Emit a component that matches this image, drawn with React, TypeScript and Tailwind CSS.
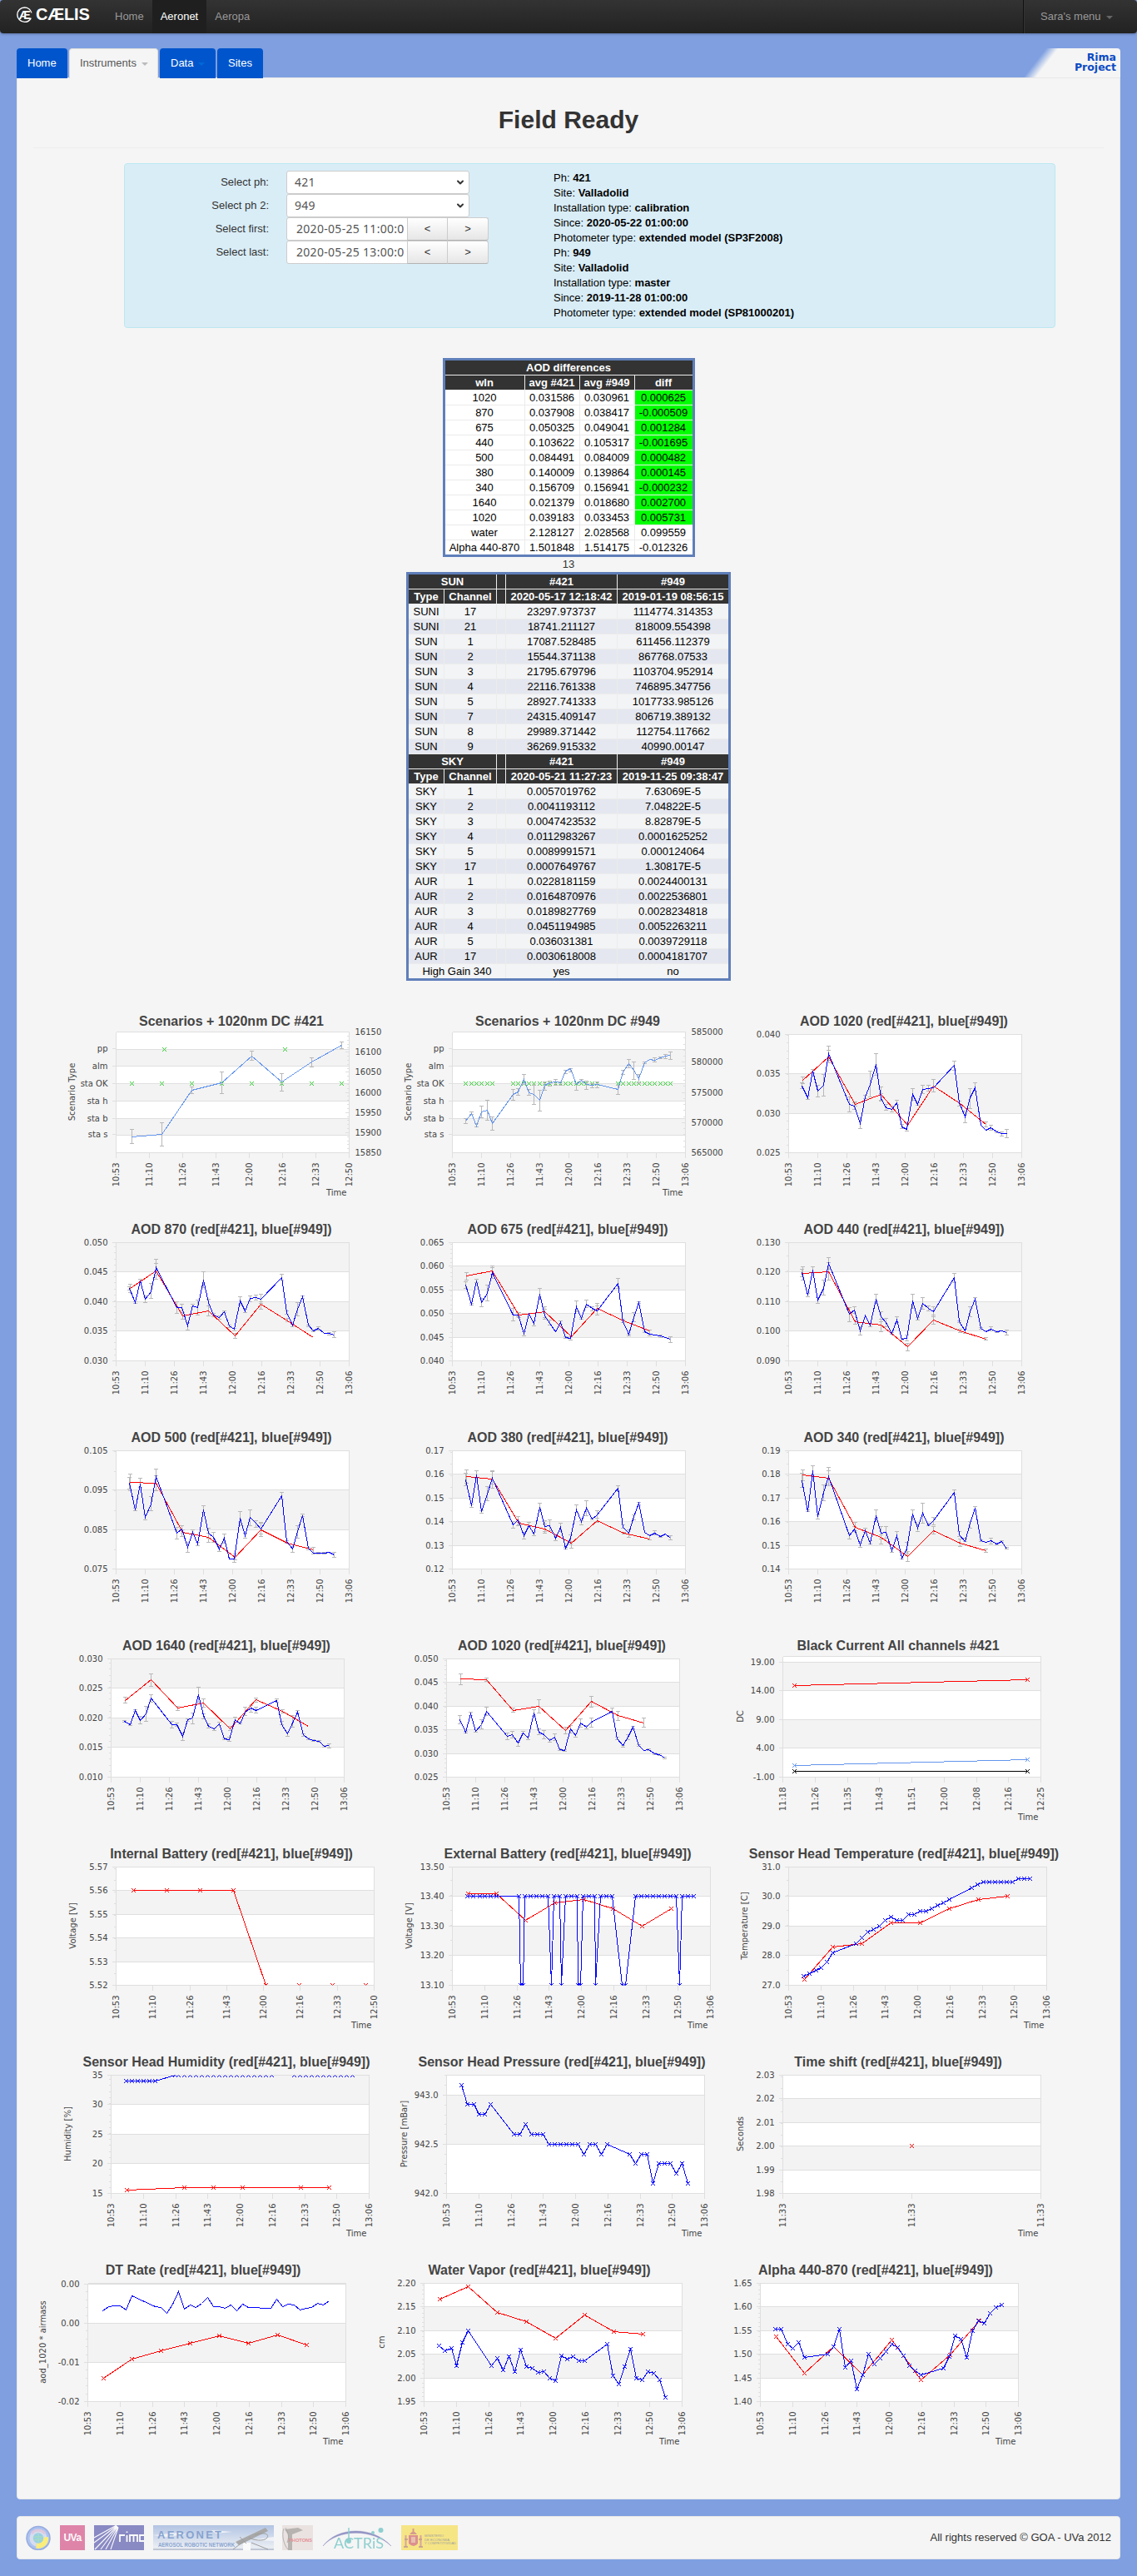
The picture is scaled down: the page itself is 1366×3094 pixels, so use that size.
import React from 'react';
import { ChevronDown } from 'lucide-react';

type Point = [number, number];

interface Series {
  color: string;
  points: Point[];
  line?: boolean;
  markers?: boolean;
}

interface ChartConfig {
  title: string;
  left: number;
  top?: number;
  width?: number;
  rows: number[]; // horizontal grid lines, px from the plot top
  labels: string[];
  labelRows?: number[];
  minor?: number;
  times: string[];
  yName?: string;
  yNameX?: number;
  showTime?: boolean;
  rightLabels?: string[];
  series: Series[];
  errors?: string;
}

const RED = '#ff0000';
const BLUE = '#0000ff';
const SKY = '#6495ed';
const GREEN = '#32cd32';

// Measurement instants, px from the start of the time axis
const X949 = [16, 23, 29, 35, 42, 48, 73, 79, 86, 92, 98, 105, 111, 117, 124, 130, 136, 142, 149, 155, 161, 168, 174, 199, 205, 212, 218, 224, 231, 237, 243, 250, 256, 262];
const X421 = [17, 48, 80, 111, 143, 174, 206, 237];
const WIDE949 = [18, 25, 33, 39, 46, 53, 81, 88, 95, 102, 109, 116, 123, 130, 137, 144, 151, 158, 165, 172, 179, 186, 193, 220, 227, 234, 241, 248, 255, 262, 269, 276, 283, 290];
const WIDE421 = [19, 53, 88, 123, 158, 193, 228, 263];

const LONG = ['10:53', '11:10', '11:26', '11:43', '12:00', '12:16', '12:33', '12:50', '13:06'];
const SHORT = LONG.slice(0, 8);

const R3 = [0, 47, 95, 142];
const R4 = [0, 35, 71, 106, 142];
const R5 = [0, 28, 57, 85, 114, 142];

const zip = (xs: number[], ys: string): Point[] => ys.split(' ').map((y, i) => [xs[i], Number(y)]);
const pts = (s: string): Point[] => s.split(' ').map(p => p.split(',').map(Number) as Point);
const crosses = (points: Point[]) => points.map(([x, y]) => `M${x - 2.5} ${y - 2.5}l5 5m0 -5l-5 5`).join('');

const aod = (name: string, left: number, rows: number[], labels: string[], minor: number, red: string, blue: string, errors: string): ChartConfig => ({
  title: `AOD ${name} (red[#421], blue[#949])`,
  left, rows, labels, minor, errors,
  times: LONG,
  series: [
    { color: RED, points: zip(X421, red) },
    { color: BLUE, points: zip(X949, blue) },
  ],
});

const charts: ChartConfig[] = [
  {
    title: 'Scenarios + 1020nm DC #421',
    left: 79, top: 39,
    rows: [0, 21, 41, 62, 83, 104, 124, 145],
    labelRows: [20, 41, 62, 83, 104, 123],
    labels: ['pp', 'alm', 'sta OK', 'sta h', 'sta b', 'sta s'],
    times: SHORT, yName: 'Scenario Type', yNameX: 30, showTime: true,
    rightLabels: ['16150', '16100', '16050', '16000', '15950', '15900', '15850'],
    series: [
      { color: GREEN, line: false, markers: true, points: pts('58,21 203,21 19,62 55,62 91,62 127,62 163,62 199,62 235,62 271,62') },
      { color: SKY, points: pts('19,126 55,123 91,70 127,61 163,29 199,60 235,36 271,16') },
    ],
    errors: '19,117,134 55,109,137 91,66,74 127,48,74 163,23,34 199,50,71 235,31,42 271,12,20',
  },
  {
    title: 'Scenarios + 1020nm DC #949',
    left: 79, top: 39,
    rows: [0, 21, 41, 62, 83, 104, 124, 145],
    labelRows: [20, 41, 62, 83, 104, 123],
    labels: ['pp', 'alm', 'sta OK', 'sta h', 'sta b', 'sta s'],
    times: LONG, yName: 'Scenario Type', yNameX: 30, showTime: true,
    rightLabels: ['585000', '580000', '575000', '570000', '565000'],
    series: [
      { color: GREEN, line: false, markers: true, points: X949.map(x => [x, 62] as Point) },
      { color: SKY, points: zip(X949, '107 98 113 96 94 110 75 72 57 73 75 82 64 61 60 61 47 44 63 58 63 64 63 69 48 38 46 56 37 33 34 31 29 28') },
    ],
    errors: '16,104,110 23,96,99 29,110,114 35,89,103 42,82,106 48,102,118 73,69,82 79,68,76 86,51,63 92,69,76 98,64,87 105,70,95 111,60,70 117,59,65 124,57,64 130,60,64 136,46,50 142,44,48 149,62,70 155,57,59 161,59,69 168,62,67 174,60,67 199,64,75 205,46,51 212,33,43 218,36,57 224,51,61 231,36,38 243,31,36 250,30,32 256,27,32 262,24,33',
  },
  aod('1020', 79, R3, ['0.040', '0.035', '0.030', '0.025'], 4,
    '55 27 84 72 109 62 83 108',
    '62 76 44 68 61 23 84 86 107 75 60 36 77 88 90 82 111 114 72 84 66 65 64 37 82 99 76 64 109 115 112 117 119 119',
    '16,58,65 17,51,59 23,74,78 29,42,46 35,61,75 42,48,74 48,14,34 48,19,31 73,75,93 79,82,90 80,81,86 86,100,113 92,73,77 98,44,75 105,23,49 111,63,80 111,71,79 117,84,91 124,86,93 130,79,84 136,108,113 142,106,116 149,65,79 155,82,85 161,61,71 168,61,68 174,54,69 199,32,43 205,80,86 212,92,106 218,65,89 224,58,68 237,105,111 243,109,115 250,116,118 256,117,122 262,114,124'),
  aod('870', 79, R4, ['0.050', '0.045', '0.040', '0.035', '0.030'], 4,
    '55 34 88 82 112 74 94 114',
    '55 72 46 68 59 30 78 78 100 76 78 45 72 87 90 83 100 104 70 82 67 66 68 42 84 99 80 65 99 106 103 109 109 111',
    '16,53,57 17,50,60 23,71,73 29,44,48 35,64,72 42,49,67 48,20,44 48,25,39 73,71,85 79,74,84 80,84,92 86,96,105 92,74,77 98,69,87 105,35,54 111,68,76 111,76,88 117,85,89 124,88,92 130,82,84 136,99,102 142,103,106 143,109,115 149,65,75 155,80,84 161,64,71 168,63,69 174,62,73 174,71,80 199,38,45 205,82,86 206,91,95 212,98,101 218,72,88 224,64,67 231,99,101 237,105,107 243,101,105 256,108,111 262,107,114'),
  aod('675', 79, R5, ['0.065', '0.060', '0.055', '0.050', '0.045', '0.040'], 4,
    '40 34 87 83 113 79 94 106',
    '51 74 46 72 61 36 87 87 109 86 97 62 88 97 107 96 114 115 77 91 74 79 82 49 95 110 90 72 107 110 111 112 114 116',
    '16,47,55 17,36,45 23,73,75 29,44,48 35,67,77 42,51,70 48,28,43 48,30,38 73,79,94 79,84,89 80,84,90 86,107,112 98,94,100 105,55,68 111,77,92 111,80,90 117,93,99 130,94,98 136,113,115 142,113,117 149,70,83 155,90,92 161,69,78 168,77,82 174,73,87 174,76,81 199,43,55 205,92,96 212,110,112 218,84,95 224,71,73 231,106,108 237,105,112 250,111,114 262,113,120'),
  aod('440', 79, R4, ['0.130', '0.120', '0.110', '0.100', '0.090'], 1,
    '37 35 95 99 125 93 106 116',
    '36 63 33 69 55 25 86 81 106 88 99 68 89 96 109 93 116 115 70 91 73 79 83 42 95 106 83 68 103 107 104 107 106 108',
    '16,32,41 17,29,45 23,61,65 29,29,36 35,66,73 42,45,63 48,18,32 48,24,45 73,78,95 79,77,85 80,93,98 86,101,111 98,97,101 105,62,73 111,83,95 111,92,107 117,91,101 124,108,110 130,89,96 136,115,117 142,111,118 143,121,130 149,62,79 155,90,93 161,66,80 168,76,82 174,77,89 174,87,98 199,37,48 205,94,96 206,104,108 212,104,109 218,77,89 224,66,70 231,102,104 237,114,117 243,101,106 250,106,108 262,105,111'),
  aod('500', 79, R3, ['0.105', '0.095', '0.085', '0.075'], 1,
    '38 39 98 104 128 95 111 119',
    '39 71 40 80 64 31 99 94 116 98 112 71 99 104 118 105 130 130 81 102 80 87 94 54 109 118 97 78 117 123 123 123 122 125',
    '16,32,46 17,28,48 23,69,72 29,33,44 35,77,83 42,55,72 48,22,48 48,30,40 73,92,106 79,90,103 80,95,99 86,110,122 92,95,99 98,110,114 105,66,74 111,93,110 111,99,105 117,98,110 124,116,121 130,100,111 142,126,134 143,124,131 149,73,90 155,99,105 161,71,90 168,84,92 174,86,103 174,87,100 199,50,58 205,108,111 212,115,122 218,90,105 224,76,79 231,116,119 237,116,124 243,122,124 250,122,124 262,122,128'),
  aod('380', 79, R5, ['0.17', '0.16', '0.15', '0.14', '0.13', '0.12'], 1,
    '31 34 87 94 111 84 99 106',
    '35 66 29 73 52 33 89 83 102 90 100 68 91 90 105 92 117 105 71 85 69 82 77 45 92 99 79 63 98 102 99 103 100 105',
    '16,27,42 17,23,39 23,64,68 29,24,33 35,72,75 42,43,60 48,24,40 48,25,45 73,85,93 79,79,90 80,86,89 86,98,106 92,86,91 98,98,102 105,63,72 111,84,99 111,88,97 117,83,96 124,103,108 130,87,97 136,116,118 142,101,112 143,109,117 149,65,74 155,84,89 161,60,78 168,81,83 174,72,86 174,81,85 199,42,48 205,89,93 206,98,100 212,95,104 218,77,83 224,62,65 237,101,107 243,96,101 250,102,104 262,102,107'),
  aod('340', 79, R5, ['0.19', '0.18', '0.17', '0.16', '0.15', '0.14'], 1,
    '29 33 92 104 127 96 111 120',
    '36 73 24 79 50 31 102 94 113 96 111 78 99 98 120 102 129 118 76 93 75 90 84 50 101 109 87 69 108 110 108 112 109 118',
    '16,27,44 17,23,36 23,71,73 29,18,31 35,77,82 42,41,60 48,20,42 48,24,40 73,99,106 79,91,97 80,86,96 86,111,116 92,93,98 98,108,112 105,71,85 111,91,106 111,101,112 117,91,105 124,117,122 130,97,106 136,126,130 142,110,123 143,121,133 149,71,82 155,88,97 161,63,87 168,87,90 174,80,89 174,91,100 199,47,52 205,97,103 206,106,115 212,105,109 218,85,93 224,67,71 231,107,109 237,118,122 243,105,112 250,111,113 256,108,110 262,116,118'),
  aod('1640', 73, R4, ['0.030', '0.025', '0.020', '0.015', '0.010'], 4,
    '50 25 59 53 84 49 63 81',
    '75 79 62 74 66 47 79 79 93 73 71 43 68 81 84 78 96 97 73 78 64 59 62 50 79 90 77 64 91 96 98 99 105 104',
    '16,74,76 17,46,53 23,78,80 29,61,63 35,69,78 42,57,75 48,18,33 48,43,52 73,75,83 79,77,81 80,57,62 86,89,98 92,72,75 98,65,78 105,34,52 111,48,58 111,66,72 117,78,83 124,83,86 130,76,80 136,95,97 142,94,99 143,81,86 149,70,76 155,76,78 161,58,68 168,56,64 174,58,65 174,47,52 199,48,52 205,75,79 206,61,65 212,88,93 218,68,82 224,62,65 231,90,93 237,95,97 243,97,99 250,98,100 256,104,106 262,102,107'),
  aod('1020', 72, R5, ['0.050', '0.045', '0.040', '0.035', '0.030', '0.025'], 4,
    '24 25 62 57 86 51 68 77',
    '73 88 66 87 79 63 93 91 101 89 95 65 88 91 98 94 109 110 84 92 77 82 76 63 96 104 94 82 104 110 109 114 115 119',
    '17,18,31 48,23,27 16,68,78 23,87,89 29,64,68 35,85,88 42,73,84 48,58,68 73,89,97 79,87,95 80,59,64 86,100,105 92,87,90 98,93,97 105,61,69 111,49,65 111,84,91 117,86,96 124,96,100 130,90,98 136,108,110 142,109,111 143,82,90 149,80,89 155,90,94 161,72,82 168,80,84 174,71,82 174,45,58 199,59,65 205,94,97 206,63,74 212,104,106 218,91,97 224,81,84 231,103,105 237,71,82 243,108,110 250,113,115 256,114,116 262,118,120'),
  {
    title: 'Black Current All channels #421',
    left: 72, top: 39, width: 310,
    rows: [0, 7, 41, 76, 110, 145],
    labelRows: [7, 41, 76, 110, 145],
    labels: ['19.00', '14.00', '9.00', '4.00', '-1.00'],
    times: ['11:18', '11:26', '11:35', '11:43', '11:51', '12:00', '12:08', '12:16', '12:25'],
    yName: 'DC', yNameX: 25, showTime: true,
    series: [
      { color: RED, markers: true, points: pts('14,35 294,28') },
      { color: SKY, markers: true, points: pts('14,131 294,124') },
      { color: '#000000', markers: true, points: pts('14,138 294,138') },
    ],
  },
  {
    title: 'Internal Battery (red[#421], blue[#949])',
    left: 79, width: 310, rows: R5, minor: 1,
    labels: ['5.57', '5.56', '5.55', '5.54', '5.53', '5.52'],
    times: SHORT, yName: 'Voltage [V]', yNameX: 31, showTime: true,
    series: [
      { color: RED, markers: true, points: pts('21,28 61,28 101,28 141,28 180,142') },
      { color: RED, line: false, markers: true, points: pts('220,142 260,142 300,142') },
    ],
  },
  {
    title: 'External Battery (red[#421], blue[#949])',
    left: 79, width: 310, rows: R4, minor: 1,
    labels: ['13.50', '13.40', '13.30', '13.20', '13.10'],
    times: LONG, yName: 'Voltage [V]', yNameX: 31, showTime: true,
    series: [
      { color: RED, markers: true, points: zip(WIDE421, '32 32 64 43 39 50 71 50') },
      { color: BLUE, markers: true, points: pts('18,35 25,35 33,35 39,35 46,35 53,35 80,35 82,142 85,142 87,35 94,35 101,35 108,35 115,35 119,142 122,35 129,35 131,142 136,35 143,35 150,35 151,142 154,142 157,35 164,35 171,35 172,142 178,35 185,35 192,35 204,142 208,142 220,35 227,35 234,35 241,35 248,35 255,35 262,35 269,35 273,142 276,35 283,35 290,35') },
    ],
  },
  {
    title: 'Sensor Head Temperature (red[#421], blue[#949])',
    left: 79, width: 310, rows: R4, minor: 1,
    labels: ['31.0', '30.0', '29.0', '28.0', '27.0'],
    times: LONG, yName: 'Temperature [C]', yNameX: 30, showTime: true,
    series: [
      { color: RED, markers: true, points: zip(WIDE421, '135 96 92 67 67 50 39 35') },
      { color: BLUE, markers: true, points: zip(WIDE949, '131 128 124 121 114 103 92 85 78 75 71 64 60 64 64 57 57 53 53 50 46 43 39 25 21 18 18 18 18 18 18 14 14 14') },
    ],
  },
  {
    title: 'Sensor Head Humidity (red[#421], blue[#949])',
    left: 73, width: 310, rows: R4, minor: 4,
    labels: ['35', '30', '25', '20', '15'],
    times: LONG, yName: 'Humidity [%]', yNameX: 25, showTime: true,
    series: [
      { color: RED, markers: true, points: pts('19,138 88,135 123,135 158,135 228,135 262,135') },
      { color: BLUE, markers: true, points: pts('18,7 25,7 32,7 39,7 46,7 53,7 77,0') },
      { color: BLUE, line: false, markers: true, points: WIDE949.slice(6).map(x => [x, 0] as Point) },
    ],
  },
  {
    title: 'Sensor Head Pressure (red[#421], blue[#949])',
    left: 72, width: 310,
    rows: [0, 24, 83, 142],
    labelRows: [24, 83, 142],
    minor: 4,
    labels: ['943.0', '942.5', '942.0'],
    times: LONG, yName: 'Pressure [mBar]', yNameX: 25, showTime: true,
    series: [
      { color: BLUE, markers: true, points: zip(WIDE949, '12 35 35 47 47 35 71 71 59 71 71 71 83 83 83 83 83 83 95 83 83 95 83 95 106 95 95 130 106 106 106 118 106 130') },
    ],
  },
  {
    title: 'Time shift (red[#421], blue[#949])',
    left: 72, width: 310, rows: R5, minor: 1,
    labels: ['2.03', '2.02', '2.01', '2.00', '1.99', '1.98'],
    times: ['11:33', '11:33', '11:33'],
    yName: 'Seconds', yNameX: 25, showTime: true,
    series: [{ color: RED, markers: true, points: [[155, 85]] }],
  },
  {
    title: 'DT Rate (red[#421], blue[#949])',
    left: 45, width: 310,
    rows: [0, 1, 48, 95, 142],
    labelRows: [1, 48, 95, 142],
    minor: 4,
    labels: ['0.00', '0.00', '-0.01', '-0.02'],
    times: LONG, yName: 'aod_1020 * airmass', yNameX: -5, showTime: true,
    series: [
      { color: RED, markers: true, points: zip(WIDE421, '114 91 81 72 63 72 62 74') },
      { color: BLUE, points: zip(WIDE949, '33 28 27 27 32 15 28 29 36 25 10 31 26 29 24 17 28 28 30 26 33 25 29 30 19 28 25 26 32 30 29 24 26 21') },
    ],
  },
  {
    title: 'Water Vapor (red[#421], blue[#949])',
    left: 45, width: 310, rows: R5, minor: 4,
    labels: ['2.20', '2.15', '2.10', '2.05', '2.00', '1.95'],
    times: LONG, yName: 'cm', yNameX: -2, showTime: true,
    series: [
      { color: RED, markers: true, points: zip(WIDE421, '19 4 35 46 66 38 58 61') },
      { color: BLUE, markers: true, points: zip(WIDE949, '75 81 78 99 71 57 99 90 104 88 106 80 100 102 107 106 114 117 87 91 88 93 93 73 111 121 100 79 114 116 106 108 116 137') },
    ],
  },
  {
    title: 'Alpha 440-870 (red[#421], blue[#949])',
    left: 45, width: 310, rows: R5, minor: 4,
    labels: ['1.65', '1.60', '1.55', '1.50', '1.45', '1.40'],
    times: LONG, showTime: true,
    series: [
      { color: RED, markers: true, points: zip(WIDE421, '64 108 76 110 68 116 86 45') },
      { color: BLUE, markers: true, points: zip(WIDE949, '55 55 73 78 71 89 85 76 55 101 93 127 110 85 97 90 82 73 77 87 99 105 110 102 88 63 67 89 57 45 48 36 29 26') },
    ],
  },
];

const Chart: React.FC<{ config: ChartConfig; id: string }> = ({ config, id }) => {
  const { title, left, top = 42, width = 280, rows, labels, labelRows = rows, minor = 0, times, yName, yNameX, showTime, rightLabels, series, errors } = config;
  const height = rows[rows.length - 1];
  const majors = labelRows;

  const minorTicks: number[] = [];
  if (minor > 0) {
    const step = (majors[majors.length - 1] - majors[majors.length - 2]) / (minor + 1);
    for (let y = height - step; y > 0; y -= step) minorTicks.push(Math.round(y));
  }

  const rightStep = rightLabels ? height / (rightLabels.length - 1) : 0;

  return (
    <svg width="404" height="250" viewBox="0 0 404 250" className="block overflow-visible" fontFamily='"DejaVu Sans", sans-serif' fontSize="10" fill="#444">
      <text x={left + 139} y="32" textAnchor="middle" fontFamily='"Liberation Sans", Arial, sans-serif' fontSize="16" fontWeight="bold">{title}</text>
      <clipPath id={id}>
        <rect x="-1" y="0" width={width + 2} height={height} />
      </clipPath>

      <g transform={`translate(${left + 0.5} ${top + 0.5})`}>
        <g shapeRendering="crispEdges">
          {/* Bands alternate upwards, the lowest one is white */}
          {rows.slice(1).map((y, i) => (
            <rect key={i} x="0" y={rows[i]} width={width} height={y - rows[i]} fill={(rows.length - 2 - i) % 2 === 0 ? '#fff' : '#f3f3f3'} />
          ))}
          <g stroke="#dfdfdf" fill="none">
            {rows.map(y => <path key={y} d={`M0 ${y}H${width}`} />)}
            {majors.map((y, i) => <path key={i} d={`M-5 ${y}H0`} />)}
            {minorTicks.map(y => <path key={y} d={`M-3 ${y}H0`} />)}
            {times.map((_, i) => {
              const x = Math.round((i * width) / (times.length - 1));
              return <path key={i} d={`M${x} ${height}v6`} />;
            })}
            {rightLabels && rightLabels.slice(1).map((_, i) => [1, 2, 3, 4, 5].map(j => (
              <path key={`${i}-${j}`} d={`M${width} ${Math.round((i + j / 5) * rightStep)}h${j === 5 ? -5 : -3}`} />
            )))}
            <path d={`M0 0V${height}M${width} 0V${height}`} />
          </g>
          {series.filter(s => s.color === GREEN).map((s, i) => (
            <path key={i} d={crosses(s.points)} stroke={s.color} fill="none" />
          ))}
          {errors && errors.split(' ').map((e, i) => {
            const [x, y1, y2] = e.split(',').map(Number);
            return <path key={i} d={`M${x} ${y1}V${y2}M${x - 2.5} ${y1}h5M${x - 2.5} ${y2}h5`} stroke="#b8b8b8" fill="none" />;
          })}
          <g clipPath={`url(#${id})`}>
            {series.filter(s => s.color !== GREEN).map((s, i) => (
              <g key={i} stroke={s.color} fill="none">
                {s.line !== false && <path d={`M${s.points.map(p => p.join(' ')).join('L')}`} />}
                {s.markers && <path d={crosses(s.points)} />}
              </g>
            ))}
          </g>
        </g>

        {labels.map((label, i) => (
          <text key={i} x="-10" y={majors[i] + 3.5} textAnchor="end">{label}</text>
        ))}
        {rightLabels && rightLabels.map((label, i) => (
          <text key={i} x={width + 7} y={Math.round(i * rightStep) + 3.5}>{label}</text>
        ))}
      </g>

      {times.map((t, i) => (
        <text key={i} transform={`translate(${left + Math.round((i * width) / (times.length - 1)) + 4} 196.5) rotate(-90)`} textAnchor="end">{t}</text>
      ))}
      {yName && (
        <text transform={`translate(${yNameX} ${top + height / 2}) rotate(-90)`} textAnchor="middle">{yName}</text>
      )}
      {showTime && <text x={left + width - 2.5} y="235.5" textAnchor="end">Time</text>}
    </svg>
  );
};

const Caret: React.FC<{ className: string }> = ({ className }) => (
  <svg width="8" height="4" viewBox="0 0 8 4" className={`ml-1.5 inline-block align-middle ${className}`}>
    <path d="M0 0h8L4 4z" fill="currentColor" />
  </svg>
);

const Navbar = () => (
  <nav className="flex h-10 rounded bg-gradient-to-b from-[#333] to-[#222] text-[#999] leading-10 shadow-[0_1px_3px_rgba(0,0,0,0.3)]">
    <a className="flex w-32 items-start gap-1 pl-5 text-xl font-bold text-white">
      <svg width="19" height="20" viewBox="0 0 19 20" className="mt-2 shrink-0">
        <circle cx="9.5" cy="9.7" r="8.7" fill="none" stroke="#fff" strokeWidth="1.4" strokeDasharray="48 7" strokeDashoffset="-4" />
        <text x="9.8" y="14.8" textAnchor="middle" fontSize="14" fontWeight="bold" fill="#fff" fontFamily='"Liberation Sans", sans-serif' textLength="14" lengthAdjust="spacingAndGlyphs">Æ</text>
      </svg>
      <span className="leading-[35px] tracking-[-0.2px]">CÆLIS</span>
    </a>
    <a className="px-2.5">Home</a>
    <a className="bg-[#1f1f1f] px-2.5 text-white">Aeronet</a>
    <a className="px-2.5">Aeropa</a>
    <div className="ml-auto w-[137px] border-l border-[#111] shadow-[inset_1px_0_0_#333] pl-5">
      Sara's menu
      <Caret className="text-[#666]" />
    </div>
  </nav>
);

const Tabs = () => (
  <div className="mx-5 mt-[18px] flex h-[35px] gap-0.5 leading-[36px] text-white">
    <a className="h-9 w-[61px] rounded-t bg-[#05c] pl-[13px]">Home</a>
    <a className="h-9 w-[107px] rounded-t border border-b-0 border-[#ddd] bg-[#f5f5f5] pl-3 leading-[34px] text-[#555]">
      Instruments
      <Caret className="text-[#bbb]" />
    </a>
    <a className="h-9 w-[67px] rounded-t bg-[#05c] pl-[13px]">
      Data
      <Caret className="text-[#0069d6]" />
    </a>
    <a className="h-9 w-[55px] rounded-t bg-[#05c] pl-[13px]">Sites</a>
    <div className="ml-auto w-[122px] rounded-tr bg-[linear-gradient(128deg,transparent_22%,#f5f5f5_32%)] pr-[5px] pt-[5px] text-right font-['DejaVu_Sans'] text-[12.5px] font-bold leading-3 text-[#0c4bc4]">
      Rima<br />Project
    </div>
  </div>
);

const SelectRow: React.FC<{ label: string; value: string }> = ({ label, value }) => (
  <div className="flex h-7">
    <label className="w-[174px] pr-px text-right leading-[27px]">{label}</label>
    <div className="ml-5 flex h-7 w-[220px] items-center justify-between rounded-[3px] border border-[#ccc] bg-white pl-[9px] pr-1 font-['Noto_Sans'] text-sm tracking-[0.3px] text-[#555]">
      {value}
      <ChevronDown className="h-3 w-3 text-[#333]" strokeWidth={4} />
    </div>
  </div>
);

const DateRow: React.FC<{ label: string; value: string }> = ({ label, value }) => (
  <div className="flex h-7">
    <label className="w-[174px] pr-px text-right leading-[27px]">{label}</label>
    <div className="ml-5 h-7 w-[146px] rounded-l-[3px] border border-[#ccc] bg-white pl-[11px] pr-1 font-['Noto_Sans'] text-sm leading-[25px] tracking-[0.3px] text-[#555]">
      <div className="overflow-hidden whitespace-nowrap">{value}</div>
    </div>
    {['<', '>'].map(s => (
      <button key={s} className="-ml-px h-7 w-[49px] border border-[#ccc] border-b-[#b3b3b3] bg-gradient-to-b from-white to-[#e6e6e6] text-[#333] last:w-[50px] last:rounded-r-[3px]">{s}</button>
    ))}
  </div>
);

const info = [
  ['Ph:', '421'],
  ['Site:', 'Valladolid'],
  ['Installation type:', 'calibration'],
  ['Since:', '2020-05-22 01:00:00'],
  ['Photometer type:', 'extended model (SP3F2008)'],
  ['Ph:', '949'],
  ['Site:', 'Valladolid'],
  ['Installation type:', 'master'],
  ['Since:', '2019-11-28 01:00:00'],
  ['Photometer type:', 'extended model (SP81000201)'],
];

const aodRows = [
  ['1020', '0.031586', '0.030961', '0.000625'],
  ['870', '0.037908', '0.038417', '-0.000509'],
  ['675', '0.050325', '0.049041', '0.001284'],
  ['440', '0.103622', '0.105317', '-0.001695'],
  ['500', '0.084491', '0.084009', '0.000482'],
  ['380', '0.140009', '0.139864', '0.000145'],
  ['340', '0.156709', '0.156941', '-0.000232'],
  ['1640', '0.021379', '0.018680', '0.002700'],
  ['1020', '0.039183', '0.033453', '0.005731'],
  ['water', '2.128127', '2.028568', '0.099559'],
  ['Alpha 440-870', '1.501848', '1.514175', '-0.012326'],
];

const sections = [
  {
    name: 'SUN',
    dates: ['2020-05-17 12:18:42', '2019-01-19 08:56:15'],
    rows: [
      ['SUNI', '17', '23297.973737', '1114774.314353'],
      ['SUNI', '21', '18741.211127', '818009.554398'],
      ['SUN', '1', '17087.528485', '611456.112379'],
      ['SUN', '2', '15544.371138', '867768.07533'],
      ['SUN', '3', '21795.679796', '1103704.952914'],
      ['SUN', '4', '22116.761338', '746895.347756'],
      ['SUN', '5', '28927.741333', '1017733.985126'],
      ['SUN', '7', '24315.409147', '806719.389132'],
      ['SUN', '8', '29989.371442', '112754.117662'],
      ['SUN', '9', '36269.915332', '40990.00147'],
    ],
  },
  {
    name: 'SKY',
    dates: ['2020-05-21 11:27:23', '2019-11-25 09:38:47'],
    rows: [
      ['SKY', '1', '0.0057019762', '7.63069E-5'],
      ['SKY', '2', '0.0041193112', '7.04822E-5'],
      ['SKY', '3', '0.0047423532', '8.82879E-5'],
      ['SKY', '4', '0.0112983267', '0.0001625252'],
      ['SKY', '5', '0.0089991571', '0.000124064'],
      ['SKY', '17', '0.0007649767', '1.30817E-5'],
      ['AUR', '1', '0.0228181159', '0.0024400131'],
      ['AUR', '2', '0.0164870976', '0.0022536801'],
      ['AUR', '3', '0.0189827769', '0.0028234818'],
      ['AUR', '4', '0.0451194985', '0.0052263211'],
      ['AUR', '5', '0.036031381', '0.0039729118'],
      ['AUR', '17', '0.0030618008', '0.0004181707'],
    ],
  },
];

const AodTable = () => (
  <div className="mx-auto grid w-[303px] grid-cols-[95px_65px_65px_69px] gap-px border-3 border-[#5f7fb9] bg-[#ebebeb] text-center text-black *:h-[17px] *:leading-[17px]">
    <div className="col-span-4 bg-[#333] font-bold text-white">AOD differences</div>
    {['wln', 'avg #421', 'avg #949', 'diff'].map(h => (
      <div key={h} className="bg-[#333] font-bold text-white">{h}</div>
    ))}
    {aodRows.map((row, i) => row.map((cell, j) => (
      <div key={`${i}-${j}`} className={j === 3 && i < 9 ? 'bg-[#0f0]' : 'bg-white'}>{cell}</div>
    )))}
  </div>
);

const ChannelTable = () => (
  <div className="mx-auto grid w-[390px] grid-cols-[42px_62px_10px_133px_133px] gap-px border-3 border-[#5f7fb9] bg-[#ececec] text-center text-black *:h-[17px] *:leading-[17px]">
    {sections.map(section => (
      <React.Fragment key={section.name}>
        <div className="col-span-2 bg-[#333] font-bold text-white">{section.name}</div>
        <div className="bg-[#333]" />
        <div className="bg-[#333] font-bold text-white">#421</div>
        <div className="bg-[#333] font-bold text-white">#949</div>
        <div className="bg-[#333] font-bold text-white">Type</div>
        <div className="bg-[#333] font-bold text-white">Channel</div>
        <div className="bg-[#333]" />
        <div className="whitespace-nowrap bg-[#333] font-bold text-white">{section.dates[0]}</div>
        <div className="whitespace-nowrap bg-[#333] font-bold text-white">{section.dates[1]}</div>
        {section.rows.map(([type, channel, a, b], i) => {
          const bg = i % 2 === 0 ? 'bg-[#f3f4f6]' : 'bg-[#e4e7ef]';
          return (
            <React.Fragment key={i}>
              <div className={bg}>{type}</div>
              <div className={bg}>{channel}</div>
              <div className={bg} />
              <div className={bg}>{a}</div>
              <div className={bg}>{b}</div>
            </React.Fragment>
          );
        })}
      </React.Fragment>
    ))}
    <div className="col-span-3 bg-[#f3f4f6]">High Gain 340</div>
    <div className="bg-[#f3f4f6]">yes</div>
    <div className="bg-[#f3f4f6]">no</div>
  </div>
);

const Logos = () => (
  <div className="flex items-center opacity-50">
    {/* GOA */}
    <svg width="30" height="30" viewBox="0 0 30 30" className="mr-[11px]">
      <circle cx="15" cy="15.5" r="14" fill="#5f8fee" stroke="#3b62c8" strokeWidth="1.5" />
      <circle cx="15" cy="15.5" r="10.5" fill="#b9c4e4" />
      <path d="M15 15.5L27 14A12 12 0 0 1 12 27.5Z" fill="#ffe400" />
      <circle cx="15" cy="15.5" r="6.2" fill="#3aa8d8" />
      <path d="M9.5 14h11M9.5 17.5h11M15 10v11" stroke="#56c58c" strokeWidth="1.5" />
      <path d="M7 10a10 10 0 0 1 16 0" stroke="#c99ac4" strokeWidth="3" fill="none" />
    </svg>
    {/* UVa */}
    <div className="mr-[11px] h-[30px] w-[30px] bg-[#c8125c] text-center text-[12px] font-bold leading-[31px] tracking-[-0.5px] text-white">UVa</div>
    {/* Rima */}
    <svg width="60" height="30" viewBox="0 0 60 30" className="mr-[11px]">
      <rect width="60" height="30" fill="#1c1c92" />
      <path d="M27 0L0 15M27 1L0 21M28 1L1 29M28 2L8 29M29 2L14 29M29 3L20 29" stroke="#fff" strokeWidth="1.1" />
      <path d="M31 20V12h6M39.5 12v8M39.500 7.500v1.500M43 20v-8h9v8M47.500 12v8M60 12h-5v7h5" stroke="#fff" strokeWidth="1.800" fill="none" />
    </svg>
    {/* Aeronet */}
    <svg width="145" height="30" viewBox="0 0 145 30" className="mr-[10px]" fontFamily='"Liberation Sans", sans-serif' fontWeight="bold" fill="#1450a8">
      <defs>
        <linearGradient id="aeronet-sky" x1="0" y1="0" x2="0" y2="1">
          <stop offset="0" stopColor="#6f92d0" />
          <stop offset="0.9" stopColor="#dfe6f2" />
          <stop offset="1" stopColor="#66759a" />
        </linearGradient>
      </defs>
      <rect width="145" height="30" fill="url(#aeronet-sky)" />
      <path d="M0 12l30-3 10 2-25 3zM70 6l25 2-20 2zM115 18l30-4v5z" fill="#e9eef8" />
      <path d="M108 30V21h9v9" fill="#fff" />
      <path d="M99 20L135 3l3 4-35 17z" fill="#5b5b5b" />
      <path d="M122 12c10-4 18-2 15 3s-18 3-22 0M96 29l12-9M118 21l20 8M104 14l8 8" stroke="#444" fill="none" />
      <text x="5" y="15.5" fontSize="13" textLength="77">AERONET</text>
      <text x="6" y="25.5" fontSize="7" textLength="92" lengthAdjust="spacingAndGlyphs">AEROSOL ROBOTIC NETWORK</text>
    </svg>
    {/* Photons */}
    <svg width="37" height="30" viewBox="0 0 37 30" className="mr-3 overflow-visible">
      <rect width="37" height="30" fill="#dccfca" />
      <path d="M3 5l16-2 6 3-13 5v19H7V11z" fill="#77706b" />
      <path d="M2 4c-3 8 0 20 5 25M4 3c3 6 5 10 2 18" stroke="#555" strokeWidth="0.8" fill="none" />
      <text x="8" y="20" fontSize="6" fontFamily='"Liberation Sans", sans-serif' fontWeight="bold" fill="#d8202c" textLength="28" lengthAdjust="spacingAndGlyphs">PHOTONS</text>
    </svg>
    {/* Actris */}
    <svg width="82" height="30" viewBox="0 0 82 30" className="mr-3">
      <path d="M0 25C18 1 60 1 82 25C60 4 18 4 0 25Z" fill="#2e3192" stroke="#2e3192" strokeWidth="0.5" />
      <text x="13" y="28" fontSize="17" fontFamily="Lato, sans-serif" fill="#27a9a9" textLength="60" lengthAdjust="spacingAndGlyphs">ACTRiS</text>
      <path d="M31 3v17" stroke="#27a9a9" strokeWidth="1.5" />
      <circle cx="31" cy="19" r="3" fill="#27a9a9" />
      <circle cx="69.5" cy="6" r="3" fill="#27a9a9" />
      <circle cx="60" cy="9" r="2" fill="#27a9a9" />
    </svg>
    {/* Ministerio */}
    <svg width="68" height="30" viewBox="0 0 68 30">
      <rect width="68" height="30" fill="#f6d414" />
      <path d="M9 12h11v10q-5 6-11 0z" fill="#c22a2a" />
      <path d="M10 11q4.500-7 9 0zM13.500 4h2v4h-2z" fill="#b5402a" />
      <path d="M5.500 12v14M23.500 12v14" stroke="#b9564a" strokeWidth="2" />
      <path d="M3 26h5M21 26h5M4 17h4M21 17h4" stroke="#8b3a2a" strokeWidth="1.5" />
      <path d="M12 14h5v7h-5z" fill="#d88a66" />
      <g fontSize="4" fontFamily='"Liberation Sans", sans-serif' fill="#444">
        <text x="28" y="14" textLength="23" lengthAdjust="spacingAndGlyphs">MINISTERIO</text>
        <text x="28" y="18.5" textLength="30" lengthAdjust="spacingAndGlyphs">DE ECONOMÍA</text>
        <text x="28" y="23" textLength="38" lengthAdjust="spacingAndGlyphs">Y COMPETITIVIDAD</text>
      </g>
    </svg>
  </div>
);

export default function App() {
  return (
    <div className="h-[3094px] w-[1366px] overflow-hidden bg-[#7f9fe0] font-['Liberation_Sans',Arial,sans-serif] text-[13px] text-[#333]">
      <Navbar />
      <Tabs />

      <main className="mx-5 h-[2909px] rounded-b border border-t-[#e8e8e8] border-[#e8e8e8] bg-[#f5f5f5]">
        <div className="mx-[19px] h-[84px] border-b border-[#eee] pt-8">
          <h1 className="text-center text-[30px] font-bold leading-9">Field Ready</h1>
        </div>

        <section className="ml-32 mt-[18px] flex h-[198px] w-[1119px] rounded border border-[#bce8f1] bg-[#d9edf7]">
          <div className="w-[515px] pt-2">
            <SelectRow label="Select ph:" value="421" />
            <SelectRow label="Select ph 2:" value="949" />
            <DateRow label="Select first:" value="2020-05-25 11:00:00" />
            <DateRow label="Select last:" value="2020-05-25 13:00:00" />
          </div>
          <div className="pt-2 leading-[18px] text-black">
            {info.map(([name, value], i) => (
              <div key={i}>{name} <b>{value}</b></div>
            ))}
          </div>
        </section>

        <section className="mt-9">
          <AodTable />
          <p className="text-center leading-[18px]">13</p>
          <ChannelTable />
        </section>

        <section className="ml-[39px] mt-[22px] grid w-[1212px] grid-cols-3">
          {charts.map((config, i) => (
            <Chart key={i} config={config} id={`plot-${i}`} />
          ))}
        </section>
      </main>

      <footer className="mx-5 mt-5 flex h-[52px] items-center justify-between rounded border border-[#e8e8e8] bg-[#f5f5f5] px-2.5">
        <Logos />
        <span>All rights reserved © GOA - UVa 2012</span>
      </footer>
    </div>
  );
}
